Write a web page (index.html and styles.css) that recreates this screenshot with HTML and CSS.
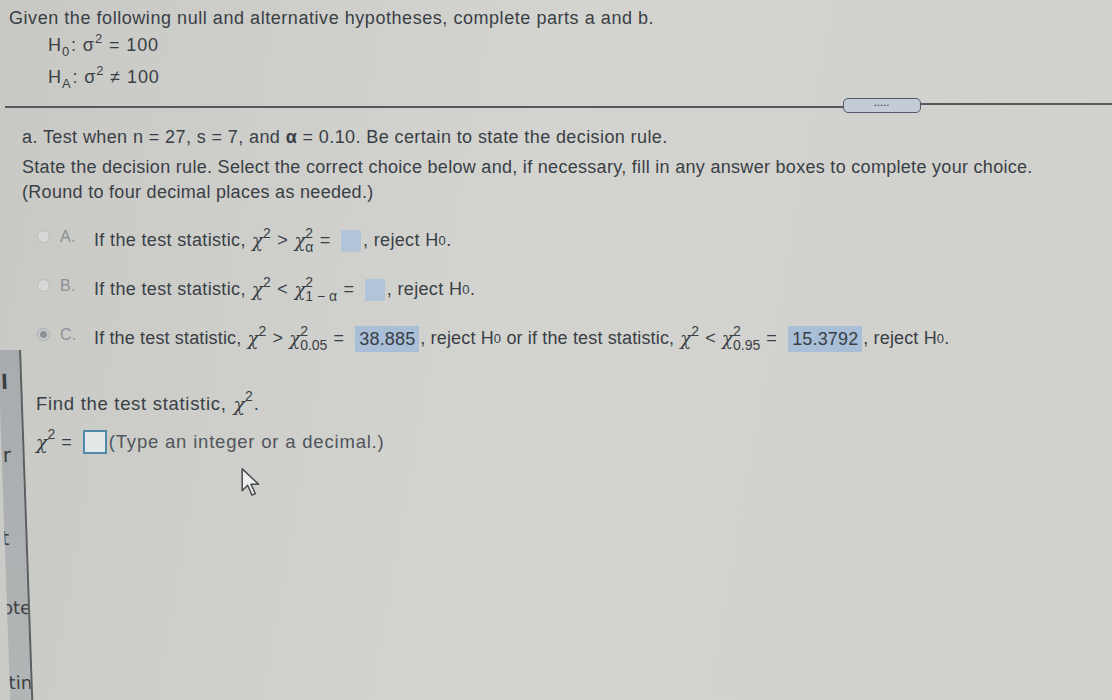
FILE: index.html
```html
<!DOCTYPE html>
<html>
<head>
<meta charset="utf-8">
<link rel="stylesheet" href="styles.css">
</head>
<body>
<div class="page">
  <div class="intro">
    <p class="title">Given the following null and alternative hypotheses, complete parts a and b.</p>
    <div class="hyp">
      <div class="hline">H<sub>0</sub><span class="colon">:</span> <span class="sig">σ</span><sup>2</sup> = 100</div>
      <div class="hline">H<sub>A</sub><span class="colon">:</span> <span class="sig">σ</span><sup>2</sup> ≠ 100</div>
    </div>
  </div>

  <div class="divider">
    <div class="rule"></div>
    <div class="pill">•••••</div>
    <div class="rule r2"></div>
  </div>

  <div class="part">
    <p class="parta">a. Test when n = 27, s = 7, and <span class="alpha">α</span> = 0.10. Be certain to state the decision rule.</p>
    <p class="instr">State the decision rule. Select the correct choice below and, if necessary, fill in any answer boxes to complete your choice.<br>(Round to four decimal places as needed.)</p>

    <div class="choices">
      <div class="choice">
        <span class="radio"></span><span class="letter">A.</span>
        <span class="ctext">If the test statistic, <span class="chi">χ<span class="stack"><span class="up">2</span><span class="dn">&nbsp;</span></span></span> &gt; <span class="chi">χ<span class="stack"><span class="up">2</span><span class="dn">α</span></span></span> = <span class="blank"></span>, reject H<sub>0</sub>.</span>
      </div>
      <div class="choice">
        <span class="radio"></span><span class="letter">B.</span>
        <span class="ctext">If the test statistic, <span class="chi">χ<span class="stack"><span class="up">2</span><span class="dn">&nbsp;</span></span></span> &lt; <span class="chi">χ<span class="stack"><span class="up">2</span><span class="dn">1 − α</span></span></span> = <span class="blank"></span>, reject H<sub>0</sub>.</span>
      </div>
      <div class="choice c3">
        <span class="radio on"></span><span class="letter">C.</span>
        <span class="ctext">If the test statistic, <span class="chi">χ<span class="stack"><span class="up">2</span><span class="dn">&nbsp;</span></span></span> &gt; <span class="chi">χ<span class="stack"><span class="up">2</span><span class="dn">0.05</span></span></span> = <span class="val">38.885</span>, reject H<sub>0</sub> or if the test statistic, <span class="chi">χ<span class="stack"><span class="up">2</span><span class="dn">&nbsp;</span></span></span> &lt; <span class="chi">χ<span class="stack"><span class="up">2</span><span class="dn">0.95</span></span></span> = <span class="val">15.3792</span>, reject H<sub>0</sub>.</span>
      </div>
    </div>

    <div class="find">
      <p class="ftitle">Find the test statistic, <span class="chi">χ<span class="stack"><span class="up">2</span><span class="dn">&nbsp;</span></span></span>.</p>
      <div class="answer">
        <span class="chi">χ<span class="stack"><span class="up">2</span><span class="dn">&nbsp;</span></span></span> = <span class="abox"></span> <span class="hint">(Type an integer or a decimal.)</span>
      </div>
      <svg class="cursor" width="24" height="32" viewBox="0 0 22 28">
        <path d="M2 2 L2 22 L7 17 L11 26 L14 24.5 L10 16 L17 16 Z" fill="#eef0ee" stroke="#4a4d52" stroke-width="1.4" stroke-linejoin="round"/>
      </svg>
    </div>
  </div>

  <div class="sidewin">
    <span class="s1">l</span>
    <span class="s2">r</span>
    <span class="s3">t</span>
    <span class="s4">ote</span>
    <span class="s5">tin</span>
  </div>
</div>
</body>
</html>
```

FILE: styles.css
```css
html, body {
  margin: 0;
  padding: 0;
}
body {
  background: #cfd0cc;
  font-family: "Liberation Sans", Arial, sans-serif;
  color: #3a3e45;
}
.page {
  position: relative;
  width: 1112px;
  height: 700px;
  overflow: hidden;
  background: linear-gradient(100deg, #c8c9c5 0%, #d3d4d0 45%, #d0d1cd 100%);
}
p { margin: 0; }
sub, sup { line-height: 0; }
.intro {
  padding: 7px 0 0 9px;
}
.title {
  font-size: 18px;
  letter-spacing: 0.55px;
  line-height: 22px;
  height: 22px;
}
.hyp {
  padding-left: 39px;
  font-size: 18px;
  letter-spacing: 0.9px;
}
.hline {
  height: 32px;
  line-height: 32px;
}
.hline sub { font-size: 13px; vertical-align: -5px; }
.hline sup { font-size: 13px; vertical-align: 8px; }
.colon { margin-left: 1px; }
.divider {
  display: flex;
  align-items: center;
  height: 16px;
  margin-top: 6px;
  padding-left: 5px;
}
.rule {
  width: 838px;
  height: 2px;
  background: #55595e;
}
.rule.r2 {
  flex: 1;
  width: auto;
  height: 1.5px;
  transform: translateY(-3px);
}
.pill {
  width: 76px;
  height: 13px;
  border: 1.5px solid #555b68;
  border-radius: 5px;
  background: #c4ccd7;
  font-size: 6px;
  line-height: 13px;
  letter-spacing: 1px;
  text-align: center;
  color: #4a5060;
  transform: translateY(-2px);
}
.part {
  padding-left: 22px;
}
.parta {
  margin-top: 10px;
  font-size: 18px;
  letter-spacing: 0.4px;
  line-height: 24px;
}
.alpha { font-weight: bold; }
.instr {
  margin-top: 6px;
  font-size: 18px;
  letter-spacing: 0.3px;
  line-height: 25px;
}
.choices {
  margin-top: 11px;
  padding-left: 15px;
}
.choice {
  display: flex;
  align-items: center;
  height: 49px;
  font-size: 18px;
  letter-spacing: 0.35px;
}
.choice.c3 { letter-spacing: 0.15px; }
.radio {
  width: 13px;
  height: 13px;
  border-radius: 50%;
  border: 1px solid #b7bab7;
  background: #d6d8d5;
  margin-right: 10px;
  margin-top: -8px;
  box-sizing: border-box;
  flex: none;
}
.radio.on {
  background: radial-gradient(circle, #8b9197 0 3px, #c6cacc 4px);
  border-color: #aab0b4;
}
.letter {
  color: #8c9094;
  width: 34px;
  margin-top: -8px;
  font-size: 16px;
  flex: none;
}
.ctext {
  display: inline-flex;
  align-items: center;
  white-space: pre;
}
.ctext sub {
  font-size: 13px;
  vertical-align: -5px;
}
.chi {
  display: inline-flex;
  align-items: center;
  font-family: "DejaVu Serif", serif;
  font-style: italic;
  font-size: 18px;
  letter-spacing: 0;
  margin: 0 1px;
}
.stack {
  display: inline-flex;
  flex-direction: column;
  font-family: "Liberation Sans", Arial, sans-serif;
  font-style: normal;
  font-size: 14px;
  line-height: 13px;
}
.up { transform: translateY(-1px); }
.blank {
  display: inline-block;
  width: 20px;
  height: 22px;
  background: #b2c5d8;
  margin: 0 2px 0 5px;
}
.val {
  display: inline-block;
  background: #a8bfd7;
  padding: 3px 4px;
  margin: 0 1px 0 6px;
  line-height: 20px;
}
.find {
  padding-left: 14px;
  margin-top: 29px;
}
.ftitle {
  display: flex;
  align-items: center;
  height: 24px;
  font-size: 18.5px;
  letter-spacing: 0.7px;
  white-space: pre;
}
.ftitle .chi { font-size: 19px; }
.answer {
  display: flex;
  align-items: center;
  height: 26px;
  margin-top: 13px;
  font-size: 18px;
  white-space: pre;
}
.answer .chi { margin-left: 0; font-size: 19px; }
.abox {
  display: inline-block;
  width: 20px;
  height: 20px;
  border: 2px solid #4f8aa8;
  background: #e4e8e8;
  margin-left: 6px;
}
.hint { color: #50555c; letter-spacing: 0.8px; font-size: 18.5px; margin-left: 2px; }
.cursor {
  display: block;
  margin: 11px 0 0 204px;
}
.sidewin {
  position: absolute;
  left: -2px;
  top: 350px;
  width: 21px;
  height: 350px;
  overflow: hidden;
  background: linear-gradient(180deg, #a8acaf, #b2b5b5);
  border-right: 2px solid #5c5f62;
  transform: skewX(2deg);
  transform-origin: top left;
  font-family: "DejaVu Sans", sans-serif;
  font-size: 20px;
  color: #3d4043;
}
.sidewin span { position: absolute; line-height: 20px; white-space: nowrap; }
.s1 { left: 2px; top: 22px; font-weight: bold; }
.s2 { left: 1px; top: 95px; }
.s3 { left: -3px; top: 178px; }
.s4 { left: -5px; top: 248px; font-size: 18px; }
.s5 { left: -1px; top: 323px; font-size: 18px; }
```
